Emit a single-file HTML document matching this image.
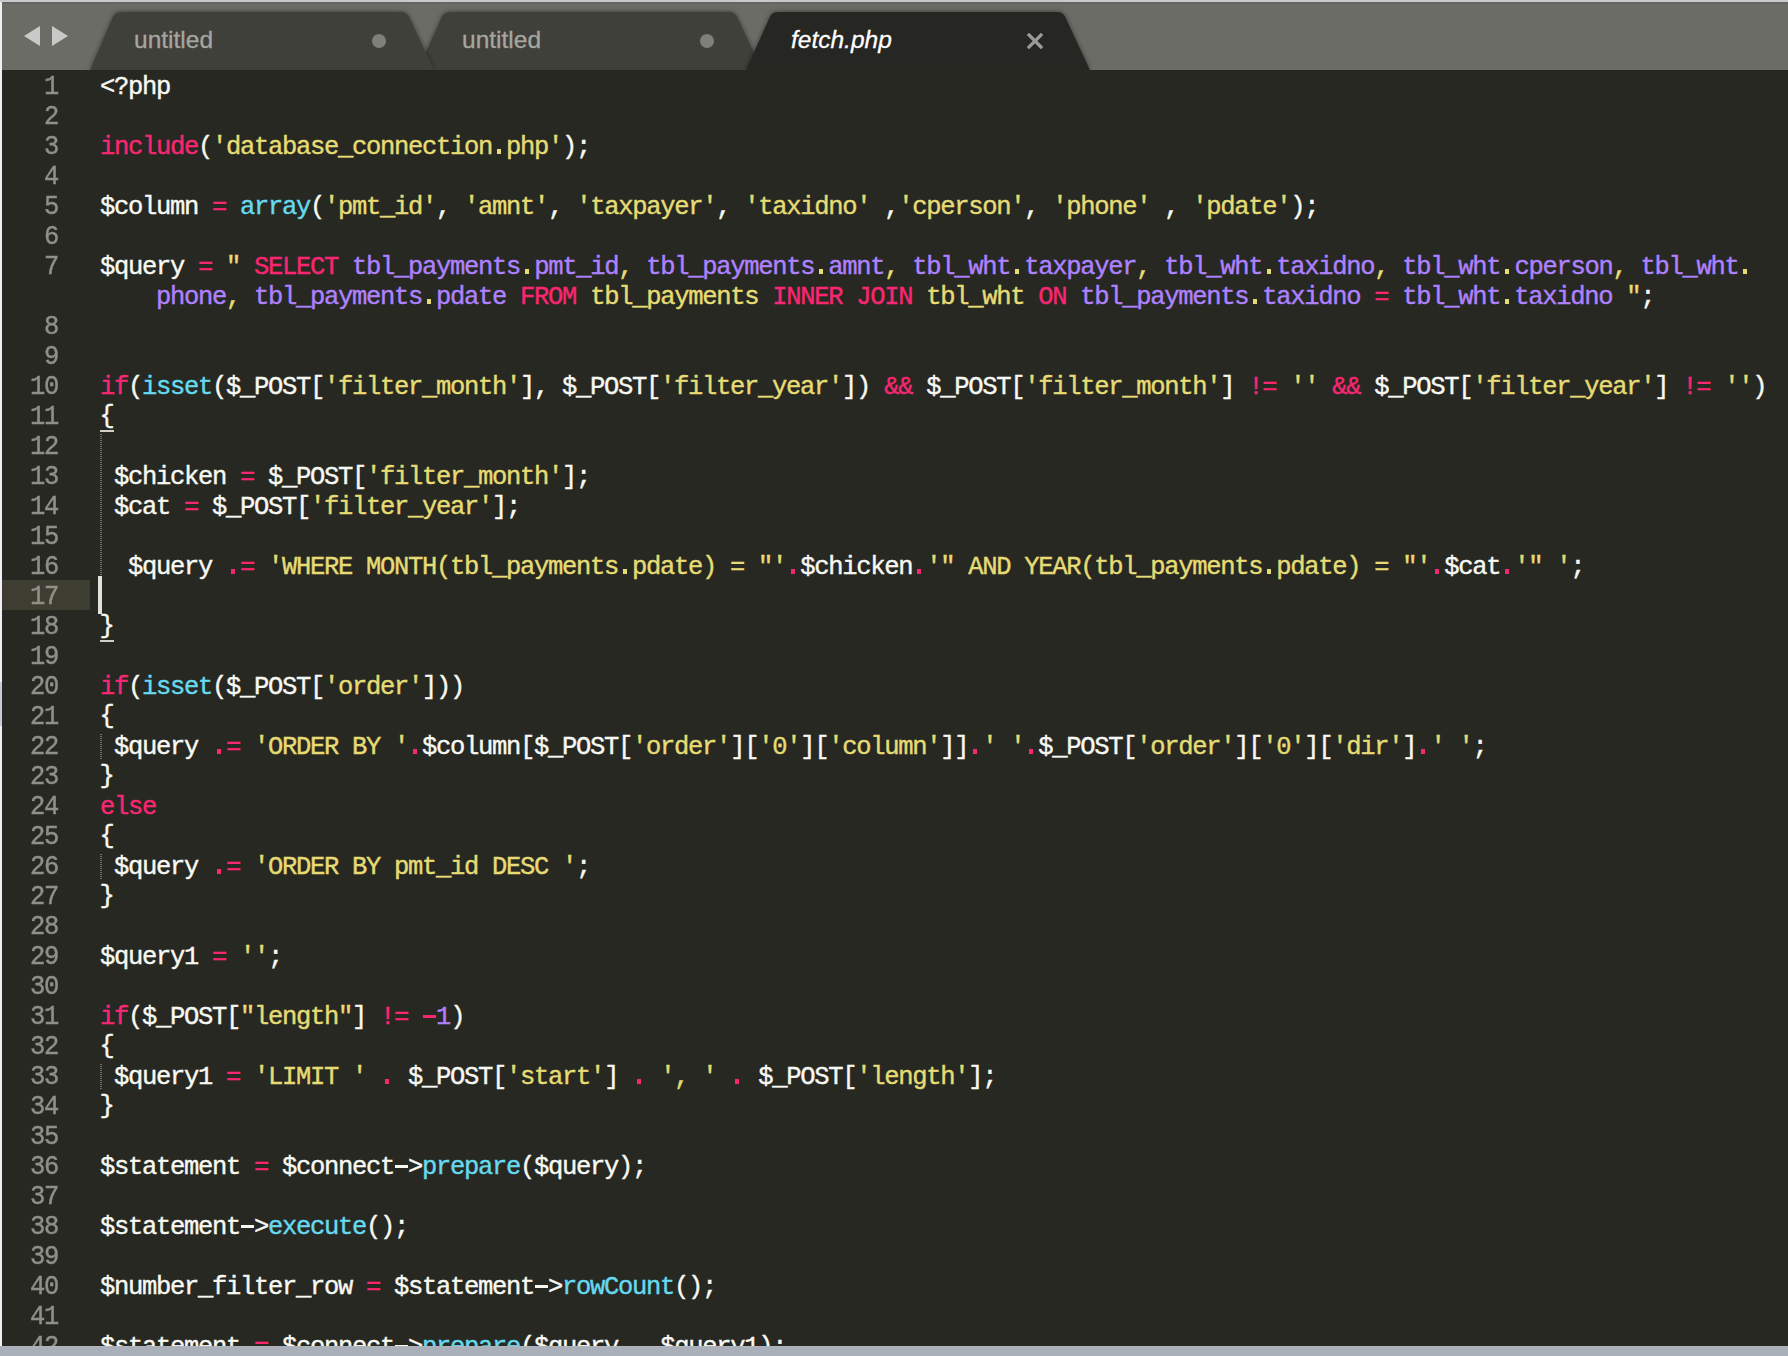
<!DOCTYPE html>
<html><head><meta charset="utf-8"><style>
*{margin:0;padding:0;box-sizing:border-box}
html,body{width:1788px;height:1356px;overflow:hidden;background:#272822}
body{position:relative;font-family:"Liberation Mono",monospace}
#topb{position:absolute;left:0;top:0;width:1788px;height:2px;background:#c9c9c9;z-index:5}
#leftb{position:absolute;left:0;top:2px;width:2px;height:1344px;background:#eef0f3;z-index:5}
#leftb2{position:absolute;left:0;top:682px;width:2px;height:44px;background:#c9ccd3;z-index:6}
#botb{position:absolute;left:0;top:1346px;width:1788px;height:10px;background:#aab0b9;border-top:1px solid #b0b5bd;z-index:5}
#botsh{position:absolute;left:0;top:1345px;width:1788px;height:1px;background:#22231e;z-index:5}
#tabbar{position:absolute;left:0;top:2px;width:1788px;height:68px;background:#6b6c66;overflow:hidden}
#editor{position:absolute;left:0;top:0;width:1788px;height:1346px;overflow:hidden}
.ln{position:absolute;left:0;width:58px;text-align:right;height:30px;line-height:30px;color:#90908a;font-size:25.5px;letter-spacing:-1.302px;white-space:pre;margin-top:3px;-webkit-text-stroke:0.4px;transform:scaleY(1.06);transform-origin:0 21px}
.curhl{position:absolute;left:2px;top:580px;width:88px;height:30px;background:#3e3d32}
.row{position:absolute;left:100px;height:30px;line-height:30px;font-size:25.5px;letter-spacing:-1.302px;white-space:pre;margin-top:3px;-webkit-text-stroke:0.4px}
.w{color:#f8f8f2}.k{color:#f92672}.s{color:#e6db74}.p{color:#ae81ff}.c{color:#66d9ef}
.guide{position:absolute;left:100px;width:2px;background:repeating-linear-gradient(to bottom,#6e6e66 0,#6e6e66 1px,transparent 1px,transparent 2px)}
.uline{position:absolute;left:100px;width:14px;height:2px;background:#cfcfc8}
.caret{position:absolute;left:98px;top:576px;width:4px;height:38px;background:#e2e2da}
.tab{position:absolute;top:10px;height:58px}
.tab svg{position:absolute;left:0;top:0}
.tt{position:absolute;top:24px;font-family:"Liberation Sans",sans-serif;font-size:24.5px;color:#a6a6a0;white-space:pre;-webkit-text-stroke:0.3px}
.dot{position:absolute;top:32px;width:14px;height:14px;border-radius:7px;background:#80807a}
.hy{position:relative;color:transparent;-webkit-text-stroke:0}
.hy::after{content:"";position:absolute;left:1px;width:13px;top:11.5px;height:3px;background:var(--c)}
.dt{position:relative;color:transparent;-webkit-text-stroke:0}
.dt::after{content:"";position:absolute;left:4.5px;width:4.5px;top:15.5px;height:5.5px;background:var(--c)}
.br{position:relative;top:-1.5px;left:-0.5px}

</style></head><body>
<div id="topb"></div>
<div id="tabbar"><svg width="1788" height="68" style="position:absolute;left:0;top:0">
<defs><filter id="sh" x="-10%" y="-50%" width="120%" height="200%"><feDropShadow dx="0" dy="0" stdDeviation="2.5" flood-color="#000" flood-opacity="0.45"/></filter>
<linearGradient id="tg" x1="0" y1="0" x2="0" y2="1"><stop offset="0" stop-color="#62635e"/><stop offset="0.015" stop-color="#62635e"/><stop offset="0.03" stop-color="#6b6c66"/><stop offset="1" stop-color="#6b6c66"/></linearGradient></defs>
<rect x="0" y="0" width="1788" height="68" fill="url(#tg)"/>
<polygon points="24,34 40,24 40,44" fill="#c9c9c7"/>
<polygon points="68,34 52,24 52,44" fill="#c9c9c7"/>
<path d="M418.0,68 L441.55,15.48 Q444.0,10 450.0,10 L729.0,10 Q735.0,10 737.53,15.44 L762.0,68 Z" fill="#3f403a" filter="url(#sh)"/>
<path d="M90.0,68 L112.63,15.51 Q115.0,10 121.0,10 L401.0,10 Q407.0,10 409.53,15.44 L434.0,68 Z" fill="#3f403a" filter="url(#sh)"/>
<path d="M746.0,68 L769.55,15.48 Q772.0,10 778.0,10 L1057.0,10 Q1063.0,10 1065.53,15.44 L1090.0,68 Z" fill="#272822" filter="url(#sh)"/>
<path d="M1029,33 L1041,45 M1041,33 L1029,45" stroke="#9a9b96" stroke-width="3.2" stroke-linecap="square"/>
</svg>
<div class="tt" style="left:134px">untitled</div>
<div class="dot" style="left:372px"></div>
<div class="tt" style="left:462px">untitled</div>
<div class="dot" style="left:700px"></div>
<div class="tt" style="left:791px;color:#fff;font-style:italic">fetch.php</div>
</div>
<div id="editor">
<div class="curhl"></div>
<div class="ln" style="top:70px">1</div>
<div class="ln" style="top:100px">2</div>
<div class="ln" style="top:130px">3</div>
<div class="ln" style="top:160px">4</div>
<div class="ln" style="top:190px">5</div>
<div class="ln" style="top:220px">6</div>
<div class="ln" style="top:250px">7</div>
<div class="ln" style="top:310px">8</div>
<div class="ln" style="top:340px">9</div>
<div class="ln" style="top:370px">10</div>
<div class="ln" style="top:400px">11</div>
<div class="ln" style="top:430px">12</div>
<div class="ln" style="top:460px">13</div>
<div class="ln" style="top:490px">14</div>
<div class="ln" style="top:520px">15</div>
<div class="ln" style="top:550px">16</div>
<div class="ln cur" style="top:580px">17</div>
<div class="ln" style="top:610px">18</div>
<div class="ln" style="top:640px">19</div>
<div class="ln" style="top:670px">20</div>
<div class="ln" style="top:700px">21</div>
<div class="ln" style="top:730px">22</div>
<div class="ln" style="top:760px">23</div>
<div class="ln" style="top:790px">24</div>
<div class="ln" style="top:820px">25</div>
<div class="ln" style="top:850px">26</div>
<div class="ln" style="top:880px">27</div>
<div class="ln" style="top:910px">28</div>
<div class="ln" style="top:940px">29</div>
<div class="ln" style="top:970px">30</div>
<div class="ln" style="top:1000px">31</div>
<div class="ln" style="top:1030px">32</div>
<div class="ln" style="top:1060px">33</div>
<div class="ln" style="top:1090px">34</div>
<div class="ln" style="top:1120px">35</div>
<div class="ln" style="top:1150px">36</div>
<div class="ln" style="top:1180px">37</div>
<div class="ln" style="top:1210px">38</div>
<div class="ln" style="top:1240px">39</div>
<div class="ln" style="top:1270px">40</div>
<div class="ln" style="top:1300px">41</div>
<div class="ln" style="top:1330px">42</div>
<div class="row" style="top:70px"><span class="w">&lt;?php</span></div>
<div class="row" style="top:130px"><span class="k">include</span><span class="w">(</span><span class="s">&#x27;database_connection<span class="dt" style="--c:#e6db74">.</span>php&#x27;</span><span class="w">);</span></div>
<div class="row" style="top:190px"><span class="w">$column </span><span class="k">=</span><span class="w"> </span><span class="c">array</span><span class="w">(</span><span class="s">&#x27;pmt_id&#x27;</span><span class="w">, </span><span class="s">&#x27;amnt&#x27;</span><span class="w">, </span><span class="s">&#x27;taxpayer&#x27;</span><span class="w">, </span><span class="s">&#x27;taxidno&#x27;</span><span class="w"> ,</span><span class="s">&#x27;cperson&#x27;</span><span class="w">, </span><span class="s">&#x27;phone&#x27;</span><span class="w"> , </span><span class="s">&#x27;pdate&#x27;</span><span class="w">);</span></div>
<div class="row" style="top:250px"><span class="w">$query </span><span class="k">=</span><span class="w"> </span><span class="s">&quot; </span><span class="k">SELECT</span><span class="s"> </span><span class="p">tbl_payments</span><span class="s"><span class="dt" style="--c:#e6db74">.</span></span><span class="p">pmt_id</span><span class="s">, </span><span class="p">tbl_payments</span><span class="s"><span class="dt" style="--c:#e6db74">.</span></span><span class="p">amnt</span><span class="s">, </span><span class="p">tbl_wht</span><span class="s"><span class="dt" style="--c:#e6db74">.</span></span><span class="p">taxpayer</span><span class="s">, </span><span class="p">tbl_wht</span><span class="s"><span class="dt" style="--c:#e6db74">.</span></span><span class="p">taxidno</span><span class="s">, </span><span class="p">tbl_wht</span><span class="s"><span class="dt" style="--c:#e6db74">.</span></span><span class="p">cperson</span><span class="s">, </span><span class="p">tbl_wht</span><span class="s"><span class="dt" style="--c:#e6db74">.</span></span></div>
<div class="row" style="top:280px"><span class="s">    </span><span class="p">phone</span><span class="s">, </span><span class="p">tbl_payments</span><span class="s"><span class="dt" style="--c:#e6db74">.</span></span><span class="p">pdate</span><span class="s"> </span><span class="k">FROM</span><span class="s"> tbl_payments </span><span class="k">INNER JOIN</span><span class="s"> tbl_wht </span><span class="k">ON</span><span class="s"> </span><span class="p">tbl_payments</span><span class="s"><span class="dt" style="--c:#e6db74">.</span></span><span class="p">taxidno</span><span class="s"> </span><span class="k">=</span><span class="s"> </span><span class="p">tbl_wht</span><span class="s"><span class="dt" style="--c:#e6db74">.</span></span><span class="p">taxidno</span><span class="s"> &quot;</span><span class="w">;</span></div>
<div class="row" style="top:370px"><span class="k">if</span><span class="w">(</span><span class="c">isset</span><span class="w">($_POST[</span><span class="s">&#x27;filter_month&#x27;</span><span class="w">], $_POST[</span><span class="s">&#x27;filter_year&#x27;</span><span class="w">]) </span><span class="k">&amp;&amp;</span><span class="w"> $_POST[</span><span class="s">&#x27;filter_month&#x27;</span><span class="w">] </span><span class="k">!=</span><span class="w"> </span><span class="s">&#x27;&#x27;</span><span class="w"> </span><span class="k">&amp;&amp;</span><span class="w"> $_POST[</span><span class="s">&#x27;filter_year&#x27;</span><span class="w">] </span><span class="k">!=</span><span class="w"> </span><span class="s">&#x27;&#x27;</span><span class="w">)</span></div>
<div class="row" style="top:400px"><span class="w"><span class="br">{</span></span></div>
<div class="row" style="top:460px"><span class="w"> $chicken </span><span class="k">=</span><span class="w"> $_POST[</span><span class="s">&#x27;filter_month&#x27;</span><span class="w">];</span></div>
<div class="row" style="top:490px"><span class="w"> $cat </span><span class="k">=</span><span class="w"> $_POST[</span><span class="s">&#x27;filter_year&#x27;</span><span class="w">];</span></div>
<div class="row" style="top:550px"><span class="w">  $query </span><span class="k"><span class="dt" style="--c:#f92672">.</span>=</span><span class="w"> </span><span class="s">&#x27;WHERE MONTH(tbl_payments<span class="dt" style="--c:#e6db74">.</span>pdate) = &quot;&#x27;</span><span class="k"><span class="dt" style="--c:#f92672">.</span></span><span class="w">$chicken</span><span class="k"><span class="dt" style="--c:#f92672">.</span></span><span class="s">&#x27;&quot; AND YEAR(tbl_payments<span class="dt" style="--c:#e6db74">.</span>pdate) = &quot;&#x27;</span><span class="k"><span class="dt" style="--c:#f92672">.</span></span><span class="w">$cat</span><span class="k"><span class="dt" style="--c:#f92672">.</span></span><span class="s">&#x27;&quot; &#x27;</span><span class="w">;</span></div>
<div class="row" style="top:610px"><span class="w"><span class="br">}</span></span></div>
<div class="row" style="top:670px"><span class="k">if</span><span class="w">(</span><span class="c">isset</span><span class="w">($_POST[</span><span class="s">&#x27;order&#x27;</span><span class="w">]))</span></div>
<div class="row" style="top:700px"><span class="w"><span class="br">{</span></span></div>
<div class="row" style="top:730px"><span class="w"> $query </span><span class="k"><span class="dt" style="--c:#f92672">.</span>=</span><span class="w"> </span><span class="s">&#x27;ORDER BY &#x27;</span><span class="k"><span class="dt" style="--c:#f92672">.</span></span><span class="w">$column[$_POST[</span><span class="s">&#x27;order&#x27;</span><span class="w">][</span><span class="s">&#x27;0&#x27;</span><span class="w">][</span><span class="s">&#x27;column&#x27;</span><span class="w">]]</span><span class="k"><span class="dt" style="--c:#f92672">.</span></span><span class="s">&#x27; &#x27;</span><span class="k"><span class="dt" style="--c:#f92672">.</span></span><span class="w">$_POST[</span><span class="s">&#x27;order&#x27;</span><span class="w">][</span><span class="s">&#x27;0&#x27;</span><span class="w">][</span><span class="s">&#x27;dir&#x27;</span><span class="w">]</span><span class="k"><span class="dt" style="--c:#f92672">.</span></span><span class="s">&#x27; &#x27;</span><span class="w">;</span></div>
<div class="row" style="top:760px"><span class="w"><span class="br">}</span></span></div>
<div class="row" style="top:790px"><span class="k">else</span></div>
<div class="row" style="top:820px"><span class="w"><span class="br">{</span></span></div>
<div class="row" style="top:850px"><span class="w"> $query </span><span class="k"><span class="dt" style="--c:#f92672">.</span>=</span><span class="w"> </span><span class="s">&#x27;ORDER BY pmt_id DESC &#x27;</span><span class="w">;</span></div>
<div class="row" style="top:880px"><span class="w"><span class="br">}</span></span></div>
<div class="row" style="top:940px"><span class="w">$query1 </span><span class="k">=</span><span class="w"> </span><span class="s">&#x27;&#x27;</span><span class="w">;</span></div>
<div class="row" style="top:1000px"><span class="k">if</span><span class="w">($_POST[</span><span class="s">&quot;length&quot;</span><span class="w">] </span><span class="k">!=</span><span class="w"> </span><span class="k"><span class="hy" style="--c:#f92672">-</span></span><span class="p">1</span><span class="w">)</span></div>
<div class="row" style="top:1030px"><span class="w"><span class="br">{</span></span></div>
<div class="row" style="top:1060px"><span class="w"> $query1 </span><span class="k">=</span><span class="w"> </span><span class="s">&#x27;LIMIT &#x27;</span><span class="w"> </span><span class="k"><span class="dt" style="--c:#f92672">.</span></span><span class="w"> $_POST[</span><span class="s">&#x27;start&#x27;</span><span class="w">] </span><span class="k"><span class="dt" style="--c:#f92672">.</span></span><span class="w"> </span><span class="s">&#x27;, &#x27;</span><span class="w"> </span><span class="k"><span class="dt" style="--c:#f92672">.</span></span><span class="w"> $_POST[</span><span class="s">&#x27;length&#x27;</span><span class="w">];</span></div>
<div class="row" style="top:1090px"><span class="w"><span class="br">}</span></span></div>
<div class="row" style="top:1150px"><span class="w">$statement </span><span class="k">=</span><span class="w"> $connect<span class="hy" style="--c:#f8f8f2">-</span>&gt;</span><span class="c">prepare</span><span class="w">($query);</span></div>
<div class="row" style="top:1210px"><span class="w">$statement<span class="hy" style="--c:#f8f8f2">-</span>&gt;</span><span class="c">execute</span><span class="w">();</span></div>
<div class="row" style="top:1270px"><span class="w">$number_filter_row </span><span class="k">=</span><span class="w"> $statement<span class="hy" style="--c:#f8f8f2">-</span>&gt;</span><span class="c">rowCount</span><span class="w">();</span></div>
<div class="row" style="top:1330px"><span class="w">$statement </span><span class="k">=</span><span class="w"> $connect<span class="hy" style="--c:#f8f8f2">-</span>&gt;</span><span class="c">prepare</span><span class="w">($query </span><span class="k"><span class="dt" style="--c:#f92672">.</span></span><span class="w"> $query1);</span></div>
<div class="guide" style="top:434px;height:141px"></div>
<div class="guide" style="top:734px;height:25px"></div>
<div class="guide" style="top:854px;height:25px"></div>
<div class="guide" style="top:1064px;height:25px"></div>
<div class="uline" style="top:430px"></div>
<div class="uline" style="top:640px"></div>
<div class="caret"></div>
</div>
<div id="leftb"></div><div id="leftb2"></div>
<div id="botb"></div>
</body></html>
